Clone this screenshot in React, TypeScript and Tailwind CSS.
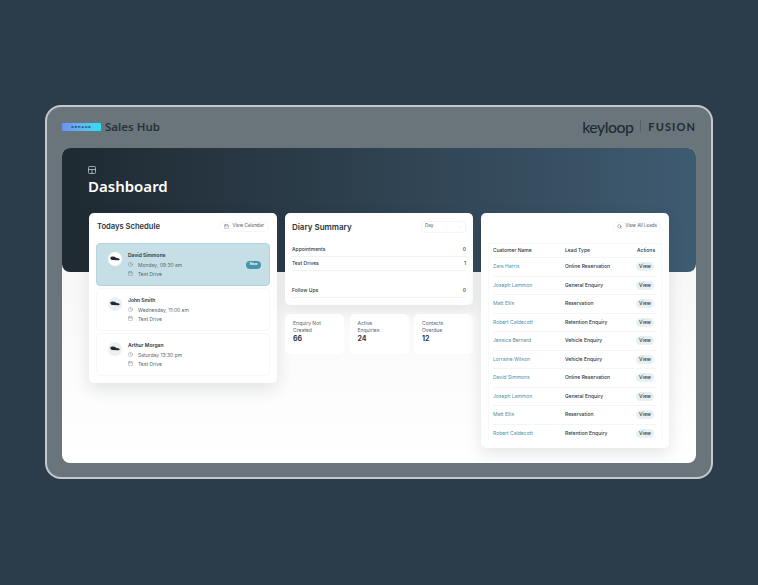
import { Calendar, Clock, Search, ChevronDown } from "lucide-react";

const SANS = "font-['Inter','Noto_Sans',sans-serif]";

type Appointment = {
  name: string;
  when: string;
  active?: boolean;
};

const APPOINTMENTS: Appointment[] = [
  { name: "David Simmons", when: "Monday, 09:30 am", active: true },
  { name: "John Smith", when: "Wednesday, 11:00 am" },
  { name: "Arthur Morgan", when: "Saturday 13:30 pm" },
];

const LEADS = [
  ["Zara Harris", "Online Reservation"],
  ["Joseph Lammon", "General Enquiry"],
  ["Matt Ellis", "Reservation"],
  ["Robert Caldecott", "Retention Enquiry"],
  ["Jessica Bernard", "Vehicle Enquiry"],
  ["Lorraine Wilson", "Vehicle Enquiry"],
  ["David Simmons", "Online Reservation"],
  ["Joseph Lammon", "General Enquiry"],
  ["Matt Ellis", "Reservation"],
  ["Robert Caldecott", "Retention Enquiry"],
];

const DIARY = [
  { label: "Appointments", value: "0", height: "h-[14px]" },
  { label: "Test Drives", value: "1", height: "h-[14px]" },
  { label: "Follow Ups", value: "0", height: "h-[14px] mt-[13px]" },
];

const STATS = [
  { label: ["Enquiry Not", "Created"], value: "66" },
  { label: ["Active", "Enquiries"], value: "24" },
  { label: ["Contacts", "Overdue"], value: "12" },
];

function CarIcon() {
  return (
    <svg viewBox="0 0 12 6" className="h-[5px] w-[10px]" fill="#1f2a33">
      <path d="M0.5 1.2 L3 0.6 L5.5 1 L8 2.4 L11 3 L11.6 4.6 L10.8 5 L2 4.8 L0.6 3.4 Z" />
    </svg>
  );
}

function AppointmentRow({ name, when, active }: Appointment) {
  return (
    <div
      className={`flex h-[43px] items-center rounded-[4px] border pl-[11px] pr-[8px] ${
        active ? "border-[#b5d3dc] bg-[#c6dfe6]" : "border-[#f8f8f9] bg-white"
      }`}
    >
      <div
        className={`-mt-[12px] flex h-[14px] w-[14px] shrink-0 items-center justify-center rounded-full ${
          active ? "bg-white" : "bg-[#eeeff0]"
        }`}
      >
        <CarIcon />
      </div>
      <div className="-mt-[1px] ml-[6px] flex flex-col gap-[3px]">
        <p className="mb-[1px] text-[5px] leading-[6px] font-semibold text-[#27323a]">{name}</p>
        <p className="flex items-center text-[5px] leading-[6px] text-[#5b666d]">
          <Clock className="mr-[5px] h-[5px] w-[5px]" strokeWidth={1.5} />
          {when}
        </p>
        <p className="flex items-center text-[5px] leading-[6px] text-[#5b666d]">
          <Calendar className="mr-[5px] h-[5px] w-[5px]" strokeWidth={1.5} />
          Test Drive
        </p>
      </div>
      {active && (
        <span className="ml-auto flex h-[8px] w-[15px] items-center justify-center rounded-full bg-[#4596ab] text-[3.5px] font-semibold text-white">
          Now
        </span>
      )}
    </div>
  );
}

function ScheduleCard() {
  return (
    <section className="h-[170px] w-[188px] rounded-[5px] bg-white px-[7px] shadow-[0_6px_16px_rgba(40,50,60,0.12)]">
      <div className="flex h-[30px] items-center justify-between pb-[3px] pl-[1px] pr-[1px]">
        <h2 className="text-[7.6px] font-semibold text-[#2a353d]">Todays Schedule</h2>
        <span className="flex h-[10px] items-center gap-[4px] rounded-[4px] border border-[#f6f7f7] px-[4px] text-[4.6px] text-[#4d585f]">
          <Calendar className="h-[5px] w-[5px]" strokeWidth={1.5} />
          View Calendar
        </span>
      </div>
      <div className="flex flex-col gap-[2px]">
        {APPOINTMENTS.map((a) => (
          <AppointmentRow key={a.name} {...a} />
        ))}
      </div>
    </section>
  );
}

function DiaryCard() {
  return (
    <section className="h-[92px] w-[188px] rounded-[5px] bg-white px-[7px] shadow-[0_6px_16px_rgba(40,50,60,0.10)]">
      <div className="flex h-[30px] items-center justify-between pb-[3px]">
        <h2 className="text-[8px] font-semibold text-[#2a353d]">Diary Summary</h2>
        <span className="flex h-[12px] w-[45px] items-center justify-between rounded-[3px] border border-[#f4f5f5] px-[3px] text-[4.6px] text-[#4d585f]">
          Day
          <ChevronDown className="h-[4px] w-[4px] text-[#d5d8da]" />
        </span>
      </div>
      {DIARY.map((row) => (
        <div
          key={row.label}
          className={`flex items-center justify-between border-b border-[#f0f1f2] text-[5px] font-medium text-[#2e393f] ${row.height}`}
        >
          <span>{row.label}</span>
          <span>{row.value}</span>
        </div>
      ))}
    </section>
  );
}

function StatCard({ label, value }: { label: string[]; value: string }) {
  return (
    <div className="h-[40px] w-[59px] rounded-[5px] bg-white pl-[8px] pt-[6px]">
      <p className="text-[5px] leading-[7px] text-[#5b666d]">
        {label[0]}
        <br />
        {label[1]}
      </p>
      <p className="mt-[1px] text-[7px] leading-[8px] font-bold text-[#2e393f]">{value}</p>
    </div>
  );
}

function LeadsCard() {
  return (
    <section className="h-[235px] w-[188px] rounded-[5px] bg-white px-[7px] shadow-[0_6px_16px_rgba(40,50,60,0.12)]">
      <div className="flex h-[27px] items-center justify-end pr-[1px]">
        <span className="flex h-[10px] items-center gap-[3px] rounded-[4px] border border-[#f8f8f9] px-[3px] text-[4.6px] text-[#4d585f]">
          <Search className="h-[5px] w-[5px]" strokeWidth={2} />
          View All Leads
        </span>
      </div>
      <div className="mt-[3px] border-x border-t border-[#f8f8f9] px-[4px]">
        <div className="flex h-[13px] items-center text-[5px] font-medium text-[#2b363d]">
          <span className="w-[72px]">Customer Name</span>
          <span className="w-[72px]">Lead Type</span>
          <span>Actions</span>
        </div>
        {LEADS.map(([name, type], i) => (
          <div
            key={`${name}-${i}`}
            className="flex h-[18.5px] items-center border-t border-[#f4f5f5] text-[5px]"
          >
            <span className="w-[72px] text-[#4d8fa3]">{name}</span>
            <span className="w-[71px] font-medium text-[#2b363d]">{type}</span>
            <span className="flex h-[9px] w-[18px] items-center justify-center rounded-full bg-[#e8f0f3] font-medium text-[#2b363d]">
              View
            </span>
          </div>
        ))}
      </div>
    </section>
  );
}

export default function App() {
  return (
    <div
      className={`${SANS} flex h-[585px] w-[758px] items-start justify-center bg-[#2b3c4a] pt-[105px]`}
    >
      <div className="h-[374px] w-[668px] rounded-[16px] border-2 border-[#c3cace] bg-[#6a757b] px-[15px]">
        <header className="flex h-[41px] items-center justify-between pb-[2px]">
          <div className="flex items-center gap-[4px]">
            <span className="flex h-[8px] w-[39px] items-center justify-center rounded-[1px] bg-gradient-to-r from-[#6f8ff0] to-[#22e0f5] font-['Liberation_Mono',monospace] text-[4px] font-bold tracking-[1px] text-[#1d3c7a]">
              DEMAND
            </span>
            <span className="font-['Noto_Sans',sans-serif] text-[11.5px] font-semibold text-[#27323b]">
              Sales Hub
            </span>
          </div>
          <div className="flex items-center text-[#1f2b34]">
            <span className="font-['Lato',sans-serif] text-[15.8px] leading-none font-medium tracking-[-0.5px]">keyloop</span>
            <span className="mx-[7px] h-[12px] w-px bg-[#55616a]" />
            <span className="font-['Lato',sans-serif] text-[11px] leading-none font-bold tracking-[1.1px]">FUSION</span>
          </div>
        </header>

        <main className="h-[315px] w-[634px] overflow-hidden rounded-[8px] bg-gradient-to-b from-[#f3f3f3] to-white">
          <div className="h-[124px] rounded-b-[8px] bg-gradient-to-r from-[#1f2a32] to-[#3f5b71] pl-[26px] pt-[18px]">
            <svg viewBox="0 0 8 8" className="h-[8px] w-[8px]" fill="none" stroke="#d5dade" strokeWidth="0.7">
              <rect x="0.5" y="0.5" width="7" height="7" rx="1" />
              <path d="M0.5 3.5H7.5M4 3.5V7.5" />
            </svg>
            <h1 className="mt-[1px] font-['Noto_Sans',sans-serif] text-[15px] leading-[22px] font-semibold text-white">
              Dashboard
            </h1>
          </div>
          <div className="-mt-[59px] flex gap-[8px] pl-[27px]">
            <ScheduleCard />
            <div className="flex flex-col gap-[9px]">
              <DiaryCard />
              <div className="flex justify-between">
                {STATS.map((s) => (
                  <StatCard key={s.value} {...s} />
                ))}
              </div>
            </div>
            <LeadsCard />
          </div>
        </main>
      </div>
    </div>
  );
}
